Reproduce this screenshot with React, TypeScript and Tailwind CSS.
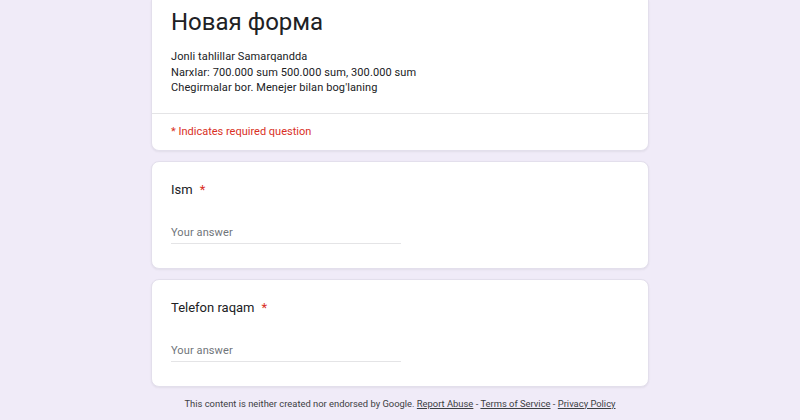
import React from 'react';

const Question: React.FC<{ label: string }> = ({ label }) => (
  <div className="bg-white rounded-lg border border-[#e3dfec] shadow-[0_1px_2px_rgba(60,64,67,0.08)] px-[19px] pt-[20px] pb-[24px]">
    <div className="text-[13px] leading-[16px] text-[#202124] h-[16px]">
      {label}
      <span className="text-[#d93025] ml-[7px]">*</span>
    </div>
    <div className="mt-[28px] w-[230px] border-b border-[#e4e4e6] pb-[3px] text-[11px] leading-[14px]">
      <span className="text-[#70757a] tracking-[0.1px]">Your answer</span>
    </div>
  </div>
);

const App: React.FC = () => {
  return (
    <div
      className="min-h-screen bg-[#f0ebf8] flex flex-col items-center"
      style={{ fontFamily: 'Roboto, "Liberation Sans", sans-serif' }}
    >
      <div className="w-[498px] flex flex-col gap-[10px]">
        {/* Header card */}
        <div className="bg-white rounded-b-lg border border-t-0 border-[#e3dfec] shadow-[0_1px_2px_rgba(60,64,67,0.08)]">
          <div className="px-[19px] pt-[6px] pb-[17px]">
            <h1 className="text-[24px] leading-[32px] text-[#202124]">Новая форма</h1>
            <div className="mt-[11px] text-[11px] leading-[15.5px] text-[#202124] tracking-[0.1px]">
              <p>Jonli tahlillar Samarqandda</p>
              <p>Narxlar: 700.000 sum 500.000 sum, 300.000 sum</p>
              <p>Chegirmalar bor. Menejer bilan bog'laning</p>
            </div>
          </div>
          <div className="border-t border-[#e4e4e6] px-[19px] pt-[11px] pb-[11px]">
            <p className="text-[11px] leading-[14px] text-[#d93025]">* Indicates required question</p>
          </div>
        </div>

        <Question label="Ism" />
        <Question label="Telefon raqam" />
      </div>

      <div className="mt-[11px] text-[9.4px] leading-[12px] text-[#3c4043]">
        This content is neither created nor endorsed by Google.{' '}
        <a className="underline">Report Abuse</a> - <a className="underline">Terms of Service</a> -{' '}
        <a className="underline">Privacy Policy</a>
      </div>
    </div>
  );
};

export default App;
